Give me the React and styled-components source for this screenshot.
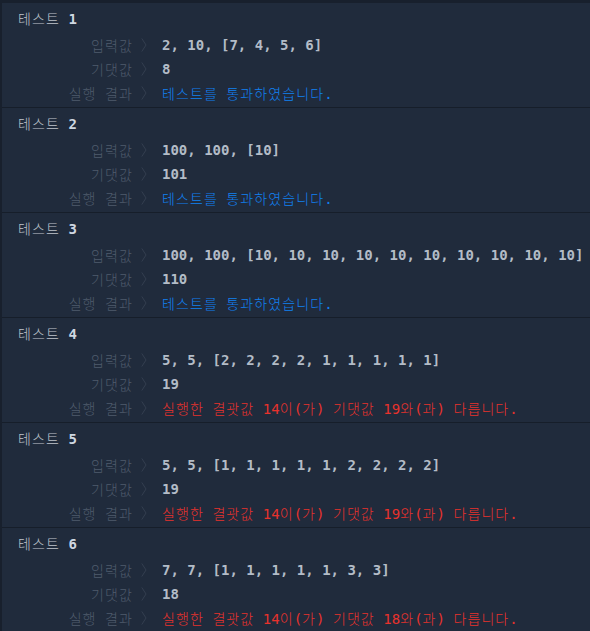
import React from "react";
import styled, { createGlobalStyle } from "styled-components";

const Global = createGlobalStyle`
  html, body { margin: 0; padding: 0; background: #202b3c; }
  body { font-family: "DejaVu Sans Mono", "Noto Sans CJK KR", monospace; }
`;

const Page = styled.div`
  background: #202b3c;
  border-left: 2px solid #18202d;
  border-top: 3px solid #18202d;
  min-height: 628px;
  font-family: "DejaVu Sans Mono", "Noto Sans CJK KR", monospace;
  font-size: 14px;
`;

const Case = styled.section`
  padding: 3px 0 2px;
  border-bottom: 1px solid #161e2a;
  &:last-child { border-bottom: none; }
`;

const Header = styled.div`
  padding-left: 16px;
  line-height: 24px;
  height: 24px;
  color: #bfc4cc;
  margin-bottom: 3px;
  white-space: pre;
`;

const Num = styled.span`
  color: #cfd7e1;
  font-weight: bold;
`;

const Row = styled.div`
  display: flex;
  align-items: center;
  height: 24px;
  line-height: 24px;
  white-space: pre;
`;

const Label = styled.span`
  width: 131px;
  text-align: right;
  color: #4f5b6c;
`;

const Chevron = styled.svg`
  width: 6px;
  height: 14px;
  margin: 0 15px 0 8px;
  flex: none;
`;

const Value = styled.span`
  color: ${(p) =>
    p.$tone === "pass" ? "#1181f2" : p.$tone === "fail" ? "#e8322c" : "#b3bcc7"};
  font-weight: ${(p) => (p.$tone ? "normal" : "bold")};
`;

const Hangul = styled.span`
  font-family: "Noto Sans CJK KR", sans-serif;
  font-weight: 300;
  letter-spacing: 1.1px;
`;

const ko = (text) =>
  text.split(/([\uAC00-\uD7A3]+)/).map((part, i) =>
    /[\uAC00-\uD7A3]/.test(part) ? <Hangul key={i}>{part}</Hangul> : part
  );

const Arrow = () => (
  <Chevron viewBox="0 0 6 14">
    <path d="M0.8 0.5 L5 7 L0.8 13.5" fill="none" stroke="#343f50" strokeWidth="1" />
  </Chevron>
);

const cases = [
  { input: "2, 10, [7, 4, 5, 6]", expected: "8", result: null },
  { input: "100, 100, [10]", expected: "101", result: null },
  {
    input: "100, 100, [10, 10, 10, 10, 10, 10, 10, 10, 10, 10]",
    expected: "110",
    result: null,
  },
  { input: "5, 5, [2, 2, 2, 2, 1, 1, 1, 1, 1]", expected: "19", result: "14" },
  { input: "5, 5, [1, 1, 1, 1, 1, 2, 2, 2, 2]", expected: "19", result: "14" },
  { input: "7, 7, [1, 1, 1, 1, 1, 3, 3]", expected: "18", result: "14" },
];

export default function App() {
  return (
    <>
      <Global />
      <Page>
        {cases.map((c, i) => (
          <Case key={i}>
            <Header>
              {ko("테스트")} <Num>{i + 1}</Num>
            </Header>
            <Row>
              <Label>{ko("입력값")}</Label>
              <Arrow />
              <Value>{c.input}</Value>
            </Row>
            <Row>
              <Label>{ko("기댓값")}</Label>
              <Arrow />
              <Value>{c.expected}</Value>
            </Row>
            <Row>
              <Label>{ko("실행 결과")}</Label>
              <Arrow />
              {c.result === null ? (
                <Value $tone="pass">{ko("테스트를 통과하였습니다.")}</Value>
              ) : (
                <Value $tone="fail">
                  {ko(`실행한 결괏값 ${c.result}이(가) 기댓값 ${c.expected}와(과) 다릅니다.`)}
                </Value>
              )}
            </Row>
          </Case>
        ))}
      </Page>
    </>
  );
}
